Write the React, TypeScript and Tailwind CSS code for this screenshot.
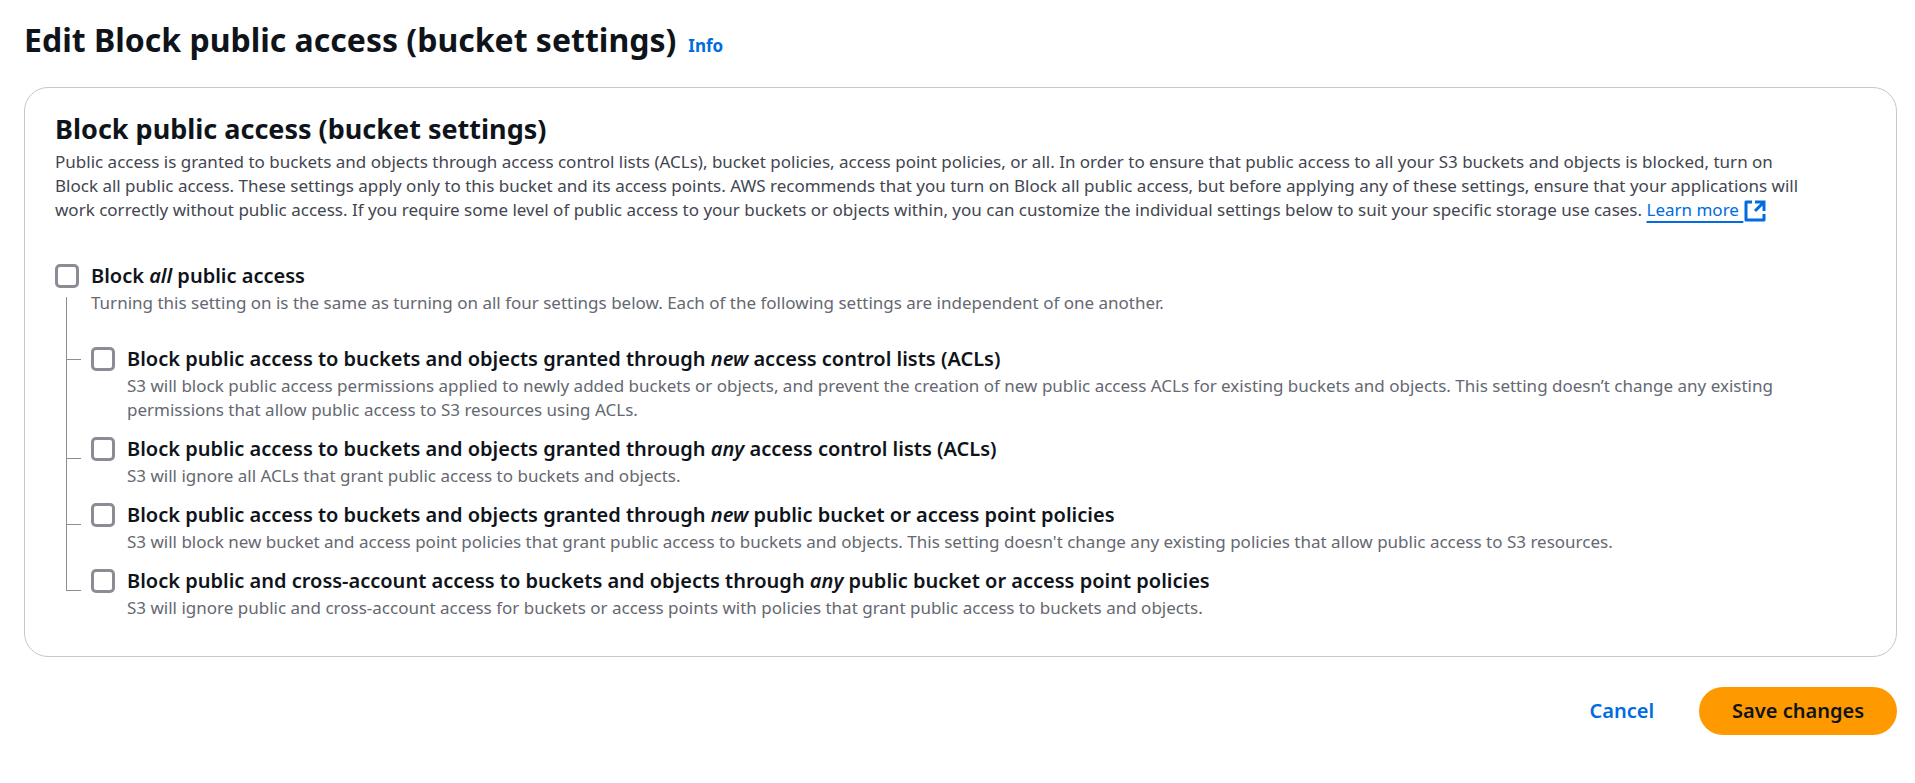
import React, { useState } from "react";

type Setting = { id: string; label: React.ReactNode; description: string };

const settings: Setting[] = [
  {
    id: "new-acls",
    label: (
      <>
        Block public access to buckets and objects granted through <em>new</em> access control lists (ACLs)
      </>
    ),
    description:
      "S3 will block public access permissions applied to newly added buckets or objects, and prevent the creation of new public access ACLs for existing buckets and objects. This setting doesn’t change any existing permissions that allow public access to S3 resources using ACLs.",
  },
  {
    id: "any-acls",
    label: (
      <>
        Block public access to buckets and objects granted through <em>any</em> access control lists (ACLs)
      </>
    ),
    description: "S3 will ignore all ACLs that grant public access to buckets and objects.",
  },
  {
    id: "new-policies",
    label: (
      <>
        Block public access to buckets and objects granted through <em>new</em> public bucket or access point policies
      </>
    ),
    description:
      "S3 will block new bucket and access point policies that grant public access to buckets and objects. This setting doesn't change any existing policies that allow public access to S3 resources.",
  },
  {
    id: "any-policies",
    label: (
      <>
        Block public and cross-account access to buckets and objects through <em>any</em> public bucket or access point
        policies
      </>
    ),
    description:
      "S3 will ignore public and cross-account access for buckets or access points with policies that grant public access to buckets and objects.",
  },
];

function Checkbox({ id, checked, onChange }: { id: string; checked: boolean; onChange: (value: boolean) => void }) {
  return (
    <input
      type="checkbox"
      id={id}
      aria-describedby={`${id}-description`}
      checked={checked}
      onChange={(event) => onChange(event.target.checked)}
      className="block size-6 shrink-0 cursor-pointer appearance-none rounded-[5px] border-3 border-[#8c8c94] bg-white checked:border-[#006ce0] checked:bg-[#006ce0]"
    />
  );
}

function SettingText({ id, label, description }: Setting) {
  return (
    <>
      <label htmlFor={id} className="block cursor-pointer text-[20px] leading-6 font-semibold text-[#0f141a]">
        {label}
      </label>
      <p id={`${id}-description`} className="mt-[3px] text-[17px] leading-6 text-[#656871]">
        {description}
      </p>
    </>
  );
}

function ExternalIcon() {
  return (
    <svg viewBox="0 0 22 22" className="-my-2 ml-px inline-block size-[22px] align-middle" fill="none" stroke="currentColor" strokeWidth="3" aria-hidden="true">
      <path d="M8 2H2v18h18v-6" strokeLinejoin="round" />
      <path d="M11 2h9v9M20 2l-9 9" />
    </svg>
  );
}

export default function App() {
  const [selected, setSelected] = useState<string[]>([]);
  const toggle = (id: string, value: boolean) =>
    setSelected((current) => (value ? [...current, id] : current.filter((item) => item !== id)));

  return (
    <main className="min-h-screen bg-white pt-[22px] pr-[18px] pb-12 pl-6 font-['Noto_Sans',sans-serif]">
      <header className="flex items-baseline gap-3">
        <h1 className="text-[32px] leading-9 font-bold text-[#0f141a]">Edit Block public access (bucket settings)</h1>
        <a href="#info" className="text-[17px] leading-6 font-bold text-[#006ce0]">
          Info
        </a>
      </header>

      <form onSubmit={(event) => event.preventDefault()}>
        <section className="mt-[29px] rounded-[24px] border border-[#c6c6cd] px-[30px] pt-[26px] pb-[21px]">
          <h2 className="text-[27px] leading-[30px] font-bold text-[#0f141a]">Block public access (bucket settings)</h2>
          <p className="mt-[6px] pr-15 text-[17px] leading-6 text-[#424650]">
            Public access is granted to buckets and objects through access control lists (ACLs), bucket policies, access
            point policies, or all. In order to ensure that public access to all your S3 buckets and objects is blocked,
            turn on Block all public access. These settings apply only to this bucket and its access points. AWS
            recommends that you turn on Block all public access, but before applying any of these settings, ensure that
            your applications will work correctly without public access. If you require some level of public access to
            your buckets or objects within, you can customize the individual settings below to suit your specific
            storage use cases.{" "}
            <a href="#learn-more" className="whitespace-nowrap text-[#006ce0]">
              <span className="underline decoration-2 underline-offset-[5px]">Learn more&nbsp;</span>
              <ExternalIcon />
            </a>
          </p>

          <div className="mt-[42px] flex">
            <div className="flex w-9 shrink-0 flex-col">
              <Checkbox
                id="block-all"
                checked={selected.length === settings.length}
                onChange={(value) => setSelected(value ? settings.map((item) => item.id) : [])}
              />
              <div className="mt-[9px] ml-[11px] flex-1 border-l border-[#8c8c94]" />
            </div>
            <div className="flex-1 pb-8">
              <SettingText
                id="block-all"
                label={
                  <>
                    Block <em>all</em> public access
                  </>
                }
                description="Turning this setting on is the same as turning on all four settings below. Each of the following settings are independent of one another."
              />
            </div>
          </div>

          <ul className="ml-[11px]">
            {settings.map((setting, index) => (
              <li key={setting.id} className="flex">
                <div className="flex w-[15px] shrink-0 flex-col">
                  <div className={`border-b border-l border-[#8c8c94] ${index === 0 ? "h-[13px]" : "h-[22px]"}`} />
                  {index < settings.length - 1 && <div className="flex-1 border-l border-[#8c8c94]" />}
                </div>
                <div className="ml-[10px] w-9 shrink-0">
                  <Checkbox
                    id={setting.id}
                    checked={selected.includes(setting.id)}
                    onChange={(value) => toggle(setting.id, value)}
                  />
                </div>
                <div className="flex-1 pb-[15px]">
                  <SettingText {...setting} />
                </div>
              </li>
            ))}
          </ul>
        </section>

        <div className="mt-[30px] flex justify-end gap-3">
          <button type="button" className="h-12 cursor-pointer rounded-full px-[33px] text-[20px] font-semibold text-[#006ce0]">
            Cancel
          </button>
          <button type="submit" className="h-12 cursor-pointer rounded-full bg-[#ff9900] px-[33px] text-[20px] font-semibold text-[#0f141a]">
            Save changes
          </button>
        </div>
      </form>
    </main>
  );
}
